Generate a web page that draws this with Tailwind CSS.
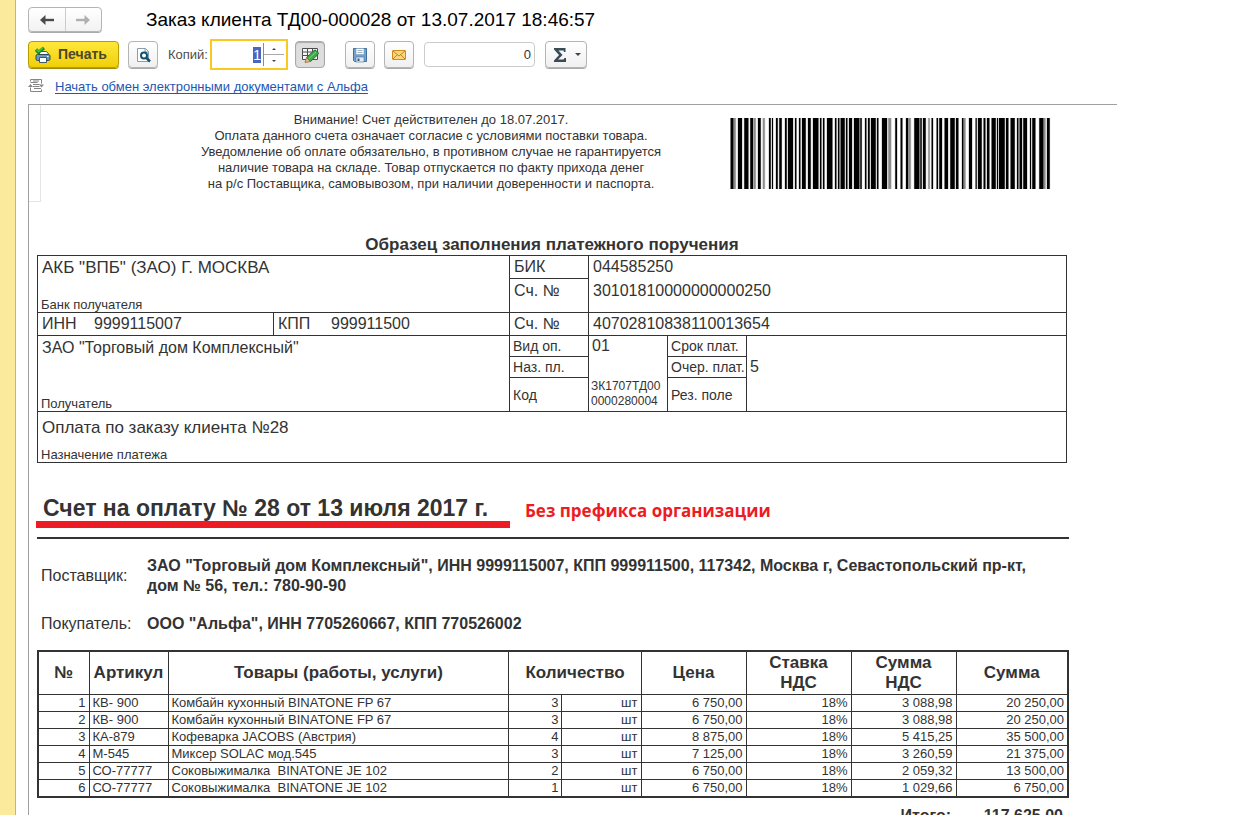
<!DOCTYPE html>
<html lang="ru">
<head>
<meta charset="utf-8">
<title>Заказ клиента ТД00-000028</title>
<script src="https://cdn.jsdelivr.net/npm/@tailwindcss/browser@4"></script>
</head>
<body class="flex h-screen overflow-hidden bg-white font-['Liberation_Sans',Arial,sans-serif] text-[#333]">
<aside class="w-4 shrink-0 border-r border-[#c3b678] bg-[#fbea9c]"></aside>
<main class="min-w-0 flex-1 pl-3">
  <header class="flex h-[39px] items-center">
    <nav class="flex h-[25px] w-[74px] rounded-sm border border-[#b4b4b4] bg-gradient-to-b from-white to-[#f2f2f2] shadow-[0_1px_0_#aaa]">
      <button type="button" aria-label="Назад" class="flex flex-1 items-center justify-center border-r border-[#ccc]">
        <svg class="h-3 w-4" viewBox="0 0 16 12"><path d="M6.500 1v10L1 6z" fill="#4a4a4a"/><path d="M5 6h10" fill="none" stroke="#4a4a4a" stroke-width="2.400"/></svg>
      </button>
      <button type="button" aria-label="Вперед" class="flex flex-1 items-center justify-center">
        <svg class="h-3 w-4" viewBox="0 0 16 12"><path d="M9.500 1v10L15 6z" fill="#b0b0b0"/><path d="M11 6H1" fill="none" stroke="#b0b0b0" stroke-width="2.400"/></svg>
      </button>
    </nav>
    <h1 class="ml-11 text-[19px] leading-6 text-black">Заказ клиента ТД00-000028 от 13.07.2017 18:46:57</h1>
  </header>

  <div class="flex h-[31px] items-center text-[13px]">
    <button type="button" class="flex h-[27px] w-[91px] items-center rounded-sm border border-[#b89c00] bg-gradient-to-b from-[#ffe838] to-[#f0d000] pl-1.5 shadow-[0_1px_0_#a08a10]">
      <svg class="h-4 w-4 shrink-0" viewBox="0 0 16 16">
        <path d="M4.500 4.500h7l2 2.500v1h-9z" fill="#fff" stroke="#3d586b"/>
        <rect x="1" y="7.500" width="14" height="6" rx="1.500" fill="#6c99b8" stroke="#2e4a5d"/>
        <path d="M4.500 10.500h7v5h-7z" fill="#fff" stroke="#3d586b"/>
        <path d="M12 9.500h1.500" stroke="#fff"/>
        <path d="m1 2.500 2.500 2.800L9 1" fill="none" stroke="#178a20" stroke-width="3.400"/>
        <path d="m1.500 2.500 2 2L8 1" fill="none" stroke="#4cc648" stroke-width="1.400"/>
      </svg>
      <span class="ml-[7px] text-[14px] font-bold text-[#4d4628]">Печать</span>
    </button>
    <button type="button" aria-label="Просмотр" class="ml-[9px] flex h-[27px] w-[30px] items-center justify-center rounded-sm border border-[#b4b4b4] bg-gradient-to-b from-white to-[#f0f0f0] shadow-[0_1px_0_#aaa]">
      <svg class="h-4 w-4" viewBox="0 0 16 16">
        <path d="M2.500 1.500h8l3 3v10h-11z" fill="#fff" stroke="#849eae"/>
        <path d="M10 1.500V5h3.500" fill="none" stroke="#849eae"/>
        <circle cx="9" cy="8.500" r="3" fill="#fff" stroke="#155173" stroke-width="2"/>
        <path d="m11 10.500 4 4" stroke="#155173" stroke-width="2.500"/>
      </svg>
    </button>
    <label for="copies" class="ml-2.5 w-[42px] whitespace-nowrap text-[#4d4d4d]">Копий:</label>
    <div class="flex h-[31px] w-[78px] items-center border-2 border-[#f9c922] bg-white pr-[2px]">
      <input id="copies" type="text" value="1" class="min-w-0 flex-1 bg-white p-0 text-right text-[14px] leading-4 text-[#333] outline-none selection:bg-[#4c66c0] selection:text-white">
      <div class="ml-0.5 flex h-[23px] w-[21px] flex-col border-l border-[#8c8c8c]">
        <button type="button" aria-label="Больше" class="flex flex-1 items-center justify-center border-b border-[#aaa]"><svg class="h-1 w-1" viewBox="0 0 4 4"><path d="m0 3 2-2 2 2z" fill="#444"/></svg></button>
        <button type="button" aria-label="Меньше" class="flex flex-1 items-center justify-center"><svg class="h-1 w-1" viewBox="0 0 4 4"><path d="m0 1 2 2 2-2z" fill="#444"/></svg></button>
      </div>
    </div>
    <button type="button" aria-label="Редактирование" class="ml-[7px] flex h-[27px] w-[30px] items-center justify-center rounded-sm border border-[#a8a8a8] bg-[#dedede] shadow-[inset_0_1px_1px_#aaa]">
      <svg class="h-4 w-[17px]" viewBox="0 0 17 16">
        <path d="M.5 1.500h15v11H.5zM.5 5h15M.5 8.500h15M5.500 1.500v11M10.500 1.500v11" fill="#f6f6f6" stroke="#4e4e4e"/>
        <path d="m4.500 10.500 7.500-7q1-1 2 0l2 2q1 1 0 2l-7.500 7z" fill="#42aa4c" stroke="#226a34"/>
        <path d="m7 11.500 7-6.500" stroke="#7fd184"/>
        <path d="m3 15.500 1.500-5 4 4z" fill="#eeb676" stroke="#886035" stroke-width=".7"/>
      </svg>
    </button>
    <button type="button" aria-label="Сохранить" class="ml-5 flex h-[27px] w-[30px] items-center justify-center rounded-sm border border-[#b4b4b4] bg-gradient-to-b from-white to-[#f0f0f0] shadow-[0_1px_0_#aaa]">
      <svg class="h-4 w-4" viewBox="0 0 16 16">
        <path d="M1.500 1.500h13v13h-12l-1-1z" fill="#72a3d0" stroke="#416f9f"/>
        <path d="M4 1.500h8v6H4z" fill="#fff" stroke="#7a9ab5" stroke-width=".6"/>
        <path d="M5.500 3.500h5M5.500 5.500h5" stroke="#9aafc0"/>
        <path d="M4 10h8v5H4z" fill="#e5eaf0" stroke="#416f9f" stroke-width=".6"/>
        <path d="M5.500 11.500h2V14h-2z" fill="#355b80"/>
      </svg>
    </button>
    <button type="button" aria-label="Отправить по почте" class="ml-[9px] flex h-[27px] w-[30px] items-center justify-center rounded-sm border border-[#b4b4b4] bg-gradient-to-b from-white to-[#f0f0f0] shadow-[0_1px_0_#aaa]">
      <svg class="h-4 w-4" viewBox="0 0 16 16">
        <rect x="1.500" y="3.500" width="13" height="9" rx=".5" fill="#fad67c" stroke="#d08a20"/>
        <path d="m2 4 6 5 6-5M2 12l4.500-4.500M14 12 9.500 7.500" fill="none" stroke="#c98422"/>
      </svg>
    </button>
    <input type="text" aria-label="Сумма" value="0" class="ml-2.5 h-[25px] w-[111px] rounded border border-[#ccc] bg-white pr-[3px] text-right text-[13px] text-[#333]">
    <button type="button" aria-label="Сумма ячеек" class="ml-2.5 flex h-[27px] w-[42px] items-center rounded-sm border border-[#b4b4b4] bg-gradient-to-b from-white to-[#f0f0f0] pl-2 shadow-[0_1px_0_#aaa]">
      <svg class="h-[14px] w-3" viewBox="0 0 12 14"><path d="M0 0h11.500v4H10L9.500 2.500H4.500L8.500 7l-4.500 4.500h5.500L10.500 10h1.500v4H0v-1.500L5 7 0 1.500z" fill="#3a4b58"/></svg>
      <svg class="ml-[9px] h-[3px] w-[6px]" viewBox="0 0 6 3"><path d="M0 0h6L3 3z" fill="#444"/></svg>
    </button>
  </div>

  <div class="flex h-[34px] items-center text-[13px]">
    <svg class="-mt-0.5 h-4 w-4" viewBox="0 0 16 16">
      <path d="M2.500 3.500v-2h11v4M13.500 11.500v2h-11v-4M2.500 4.500h7M5 6.500h6.500M5 8.500h6.500M6 10.500h7M5 3h6" fill="none" stroke="#858585"/>
      <path d="m0 9 2.500-3L5 9zM11 6.500h5l-2.500 3z" fill="#858585"/>
    </svg>
    <a href="#" class="ml-[11px] text-[#1e56b4] underline underline-offset-2">Начать обмен электронными документами с Альфа</a>
  </div>

  <section class="relative mr-[121px] h-full border-t border-l border-[#a0a0a0] pr-12 pl-2">
    <div class="absolute top-0 left-0 h-[97px] w-3 border-r border-b border-[#e4e4e4]"></div>

    <div class="flex items-start justify-between pt-[7px]">
      <p class="ml-[164px] text-center text-[13px] leading-4 whitespace-nowrap">Внимание! Счет действителен до 18.07.2017.<br>Оплата данного счета означает согласие с условиями поставки товара.<br>Уведомление об оплате обязательно, в противном случае не гарантируется<br>наличие товара на складе. Товар отпускается по факту прихода денег<br>на р/с Поставщика, самовывозом, при наличии доверенности и паспорта.</p>
      <svg class="mt-1.5 mr-[18px] h-[71px] w-[321px]" viewBox="0 0 963 213" preserveAspectRatio="none" role="img" aria-label="Штрихкод"><path id="halo" fill="#888" stroke="#999" stroke-width="2"/><path id="bars" fill="#000"/></svg>
    </div>

    <h2 class="mt-[43px] mr-0.5 text-center text-[17px] leading-5 font-bold">Образец заполнения платежного поручения</h2>

    <div class="mr-0.5">
    <table class="w-full table-fixed border-collapse border border-[#333] text-[16px] leading-5">
      <colgroup><col class="w-[236px]"><col class="w-[236px]"><col class="w-[79px]"><col class="w-[79px]"><col class="w-[79px]"><col></colgroup>
      <tbody>
      <tr class="h-[23px]">
        <td colspan="2" rowspan="2" class="border border-[#333] p-0">
          <div class="flex h-14 flex-col justify-between px-1 pt-0.5"><span class="text-[17px]">АКБ "ВПБ" (ЗАО) Г. МОСКВА</span><span class="-ml-px text-[13px] leading-[14px]">Банк получателя</span></div>
        </td>
        <td class="border border-[#333] p-0 pl-1">БИК</td>
        <td colspan="3" class="p-0 pl-1">044585250</td>
      </tr>
      <tr class="h-[34px]">
        <td class="border border-[#333] p-0 pt-0.5 pl-1 align-top">Сч. №</td>
        <td colspan="3" class="p-0 pt-0.5 pl-1 align-top">30101810000000000250</td>
      </tr>
      <tr class="h-[23px]">
        <td class="border border-[#333] p-0 pl-1"><span class="inline-block w-[52px]">ИНН</span>9999115007</td>
        <td class="border border-[#333] p-0 pl-1"><span class="inline-block w-[53px]">КПП</span>999911500</td>
        <td class="border border-[#333] p-0 pl-1">Сч. №</td>
        <td colspan="3" class="border border-[#333] p-0 pl-1">40702810838110013654</td>
      </tr>
      <tr class="h-[21px] leading-[18px]">
        <td colspan="2" rowspan="3" class="border border-[#333] p-0">
          <div class="flex h-[75px] flex-col justify-between px-1 pt-0.5"><span class="leading-5">ЗАО "Торговый дом Комплексный"</span><span class="-ml-px text-[13px] leading-[14px]">Получатель</span></div>
        </td>
        <td class="border border-[#333] p-0 pl-[3px] text-[14px]">Вид оп.</td>
        <td class="border-x border-[#333] p-0 pl-[3px]">01</td>
        <td class="border border-[#333] p-0 pl-[3px] text-[14px]">Срок плат.</td>
        <td class="p-0"></td>
      </tr>
      <tr class="h-[21px] leading-[18px]">
        <td class="border border-[#333] p-0 pl-[3px] text-[14px]">Наз. пл.</td>
        <td class="border-x border-[#333] p-0"></td>
        <td class="border border-[#333] p-0 pl-[3px] text-[14px] whitespace-nowrap">Очер. плат.</td>
        <td class="p-0 pl-[3px]">5</td>
      </tr>
      <tr class="h-[34px]">
        <td class="border border-[#333] p-0 pl-[3px] text-[14px]">Код</td>
        <td class="border-x border-[#333] p-0 pl-0.5 text-[12px] leading-[15px]">ЗК1707ТД00<br>0000280004</td>
        <td class="border border-[#333] p-0 pl-[3px] text-[14px]">Рез. поле</td>
        <td class="p-0"></td>
      </tr>
      <tr class="h-[51px]">
        <td colspan="6" class="border border-[#333] p-0">
          <div class="flex h-[50px] flex-col justify-between px-1 pt-1.5"><span class="text-[17px]">Оплата по заказу клиента №28</span><span class="-ml-px text-[13px] leading-[14px]">Назначение платежа</span></div>
        </td>
      </tr>
      </tbody>
    </table>
    </div>

    <div class="mt-8 flex items-start border-b-2 border-[#333] pb-[9px]">
      <h2 class="-ml-px w-[474px] border-b-[7px] border-[#ed1c24] pl-[7px] text-[23px] leading-[26px] font-bold whitespace-nowrap">Счет на оплату № 28 от 13 июля 2017 г.</h2>
      <p class="mt-1 ml-[15px] font-['Open_Sans',sans-serif] text-[17px] leading-6 font-bold text-[#ed1c24]">Без префикса организации</p>
    </div>

    <dl class="mt-[17px] grid grid-cols-[106px_1fr] items-center gap-y-[18px] pr-6 pl-1 text-[16px] leading-5">
      <dt>Поставщик:</dt>
      <dd class="font-bold">ЗАО "Торговый дом Комплексный", ИНН 9999115007, КПП 999911500, 117342, Москва г, Севастопольский пр-кт, дом № 56, тел.: 780-90-90</dd>
      <dt>Покупатель:</dt>
      <dd class="font-bold">ООО "Альфа", ИНН 7705260667, КПП 770526002</dd>
    </dl>

    <table class="mt-4 w-full table-fixed border-collapse border-2 border-[#333] text-[13px] leading-4 [&_td]:border [&_td]:border-[#333] [&_td]:px-[3px] [&_td]:py-0 [&_th]:border [&_th]:border-[#333] [&_th]:p-0">
      <colgroup><col class="w-[51px]"><col class="w-[79px]"><col><col class="w-[53px]"><col class="w-[79px]"><col class="w-[105px]"><col class="w-[105px]"><col class="w-[105px]"><col class="w-[112px]"></colgroup>
      <thead>
        <tr class="h-[43px] text-[17px] leading-5"><th>№</th><th>Артикул</th><th>Товары (работы, услуги)</th><th colspan="2">Количество</th><th>Цена</th><th>Ставка<br>НДС</th><th>Сумма<br>НДС</th><th>Сумма</th></tr>
      </thead>
      <tbody class="text-right [&_td:nth-child(2)]:text-left [&_td:nth-child(3)]:text-left [&_td:nth-child(3)]:whitespace-pre">
        <tr><td>1</td><td>КВ- 900</td><td>Комбайн кухонный BINATONE FP 67</td><td>3</td><td>шт</td><td>6 750,00</td><td>18%</td><td>3 088,98</td><td>20 250,00</td></tr>
        <tr><td>2</td><td>КВ- 900</td><td>Комбайн кухонный BINATONE FP 67</td><td>3</td><td>шт</td><td>6 750,00</td><td>18%</td><td>3 088,98</td><td>20 250,00</td></tr>
        <tr><td>3</td><td>КА-879</td><td>Кофеварка JACOBS (Австрия)</td><td>4</td><td>шт</td><td>8 875,00</td><td>18%</td><td>5 415,25</td><td>35 500,00</td></tr>
        <tr><td>4</td><td>М-545</td><td>Миксер SOLAC мод.545</td><td>3</td><td>шт</td><td>7 125,00</td><td>18%</td><td>3 260,59</td><td>21 375,00</td></tr>
        <tr><td>5</td><td>СО-77777</td><td>Соковыжималка  BINATONE JE 102</td><td>2</td><td>шт</td><td>6 750,00</td><td>18%</td><td>2 059,32</td><td>13 500,00</td></tr>
        <tr><td>6</td><td>СО-77777</td><td>Соковыжималка  BINATONE JE 102</td><td>1</td><td>шт</td><td>6 750,00</td><td>18%</td><td>1 029,66</td><td>6 750,00</td></tr>
      </tbody>
    </table>
    <p class="mt-2 flex justify-end pr-1.5 text-[16px] leading-5 font-bold"><span>Итого:</span><span class="w-[112px] text-right">117 625,00</span></p>
  </section>
</main>
<script>
  // Start and end of each bar, in thirds of a pixel.
  const bars = [[2,10],[24,36],[43,55],[61,69],[84,92],[117,122],[126,129],[138,143],[148,155],[165,170],[174,189],[195,199],[207,211],[216,227],[234,242],[249,265],[270,274],[279,283],[291,307],[315,319],[324,328],[332,344],[348,352],[357,366],[372,388],[391,395],[405,409],[414,419],[423,437],[441,445],
    [456,471],[496,501],[512,517],[528,534],[553,568],[571,575],[579,587],[605,609],[620,624],[628,636],[644,654],[661,674],[678,685],[696,700],[717,726],[737,740],[744,755],[761,766],[771,778],[785,797],[801,804],[807,824],[828,835],[842,854],[861,865],[869,876],[880,891],[900,903],[907,916],[928,940],[951,959]];
  // Lighter bars that sit beside the black ones.
  const light = [[9,17],[71,77],[99,104],[475,483],[534,542],[595,599],[700,706],[940,946]];
  const draw = list => list.map(([a, b]) => `M${a} 0H${b}V213H${a}z`).join('');
  document.getElementById('bars').setAttribute('d', draw(bars));
  document.getElementById('halo').setAttribute('d', draw(bars.concat(light)));

  const copies = document.getElementById('copies');
  copies.focus();
  copies.select();
</script>
</body>
</html>
